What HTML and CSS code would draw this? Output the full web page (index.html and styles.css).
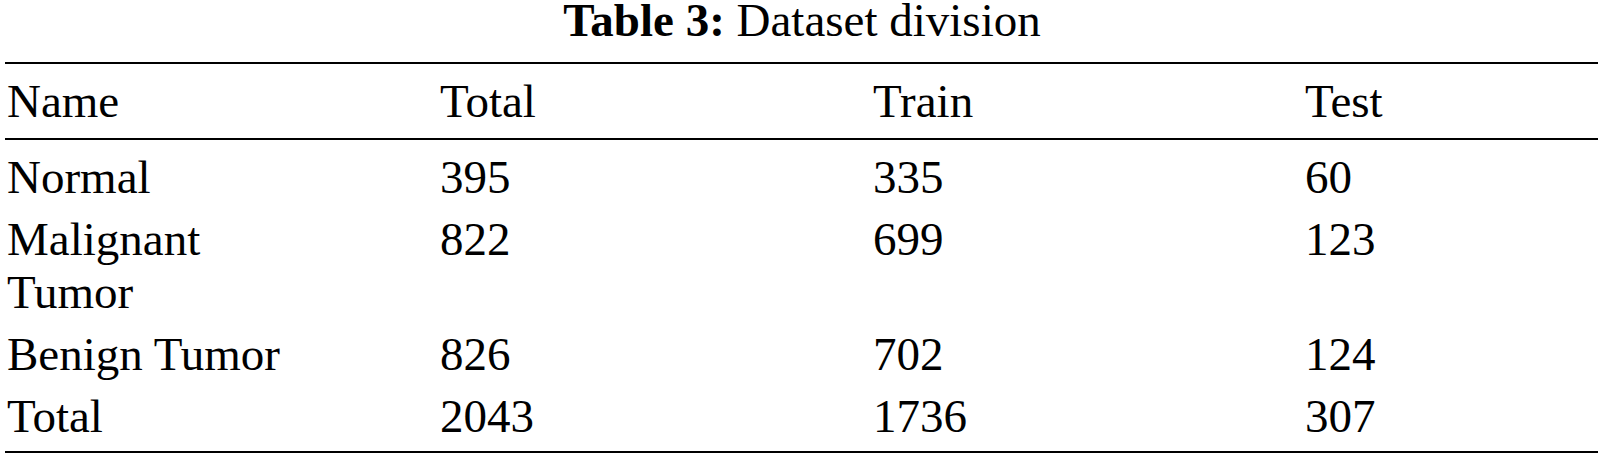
FILE: index.html
```html
<!DOCTYPE html>
<html lang="en">
<head>
    <meta charset="UTF-8">
    <title>Table 3: Dataset division</title>
    <link rel="stylesheet" href="styles.css">
</head>
<body>
    <div class="caption"><b>Table 3:</b> Dataset division</div>
    <table class="data">
        <colgroup>
            <col class="c1">
            <col class="c2">
            <col class="c3">
            <col class="c4">
        </colgroup>
        <thead>
            <tr>
                <th>Name</th>
                <th>Total</th>
                <th>Train</th>
                <th>Test</th>
            </tr>
        </thead>
        <tbody>
            <tr class="first">
                <td>Normal</td>
                <td>395</td>
                <td>335</td>
                <td>60</td>
            </tr>
            <tr>
                <td>Malignant<br>Tumor</td>
                <td>822</td>
                <td>699</td>
                <td>123</td>
            </tr>
            <tr>
                <td>Benign Tumor</td>
                <td>826</td>
                <td>702</td>
                <td>124</td>
            </tr>
            <tr class="last">
                <td>Total</td>
                <td>2043</td>
                <td>1736</td>
                <td>307</td>
            </tr>
        </tbody>
    </table>
</body>
</html>
```

FILE: styles.css
```css
body {
    margin: 0;
    background: #fff;
    color: #000;
    font-family: 'Liberation Serif', 'Times New Roman', serif;
    font-size: 47px;
}
.caption {
    height: 40px;
    line-height: 40px;
    text-align: center;
    margin-bottom: 22px;
}
.caption b {
    font-weight: bold;
}
.data {
    margin-left: 5px;
    width: 1593px;
    border-collapse: collapse;
    table-layout: fixed;
    border-top: 2px solid #000;
    border-bottom: 2px solid #000;
}
.c1, .c2 {
    width: 433px;
}
.c3 {
    width: 432px;
}
.data th,
.data td {
    font-weight: normal;
    text-align: left;
    vertical-align: top;
    line-height: 53px;
    padding: 4px 0 5px 2px;
}
.data thead th {
    padding-top: 11px;
    padding-bottom: 10px;
    border-bottom: 2px solid #000;
}
.data tr.first td {
    padding-top: 11px;
}
.data tr.last td {
    padding-bottom: 8px;
}
```
